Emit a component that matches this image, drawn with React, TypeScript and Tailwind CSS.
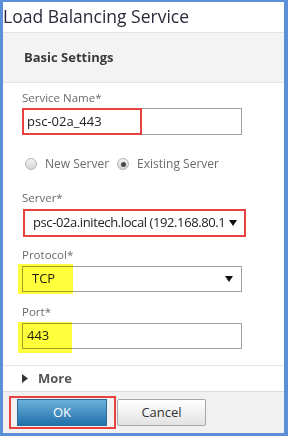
import React from "react";

const font = { fontFamily: '"Open Sans", "Noto Sans", sans-serif' };

function Arrow() {
  return (
    <svg width="8" height="8" viewBox="0 0 8 8" className="shrink-0">
      <path d="M0 1 L8 1 L4 7 Z" fill="#111" />
    </svg>
  );
}

function Radio({ checked }: { checked?: boolean }) {
  return (
    <span className="flex h-[12px] w-[12px] shrink-0 items-center justify-center rounded-full border border-[#b5b5b5] bg-gradient-to-b from-[#f4f4f4] to-[#d4d4d4]">
      {checked && <span className="h-[5px] w-[5px] rounded-full bg-[#4a4a4a]" />}
    </span>
  );
}

export default function App() {
  return (
    <div
      className="flex h-[436px] w-[288px] flex-col bg-[#5b8fd7] pb-[3px] pl-[3px] pr-[4px] pt-[2px]"
      style={font}
    >
      <div className="flex flex-1 flex-col bg-white">
        <div className="flex h-[30px] items-center text-[17.5px] leading-none text-[#2a2a3a]">
          Load Balancing Service
        </div>
        <div className="flex h-[51px] items-center border-y border-[#e3e3e3] bg-[#f3f3f3] pl-[21px] text-[13px] font-bold text-[#3a3a3a]">
          Basic Settings
        </div>
        <div className="flex flex-col px-[19px] pt-[7px]">
          <div className="h-[16px] text-[11.5px] leading-[16px] text-[#6b6b6b]">Service Name*</div>
          <div className="relative mt-[2px] flex h-[27px] w-[220px] items-center border border-[#a0a0a0] pl-[4px] text-[13px] text-[#222]">
            psc-02a_443
            <div className="absolute left-[-1px] top-[-1px] h-[27px] w-[120px] border-2 border-[#e8413f]" />
          </div>

          <div className="mt-[21px] flex h-[16px] items-center text-[12px] text-[#6b6b6b]">
            <span className="ml-[3px]"><Radio /></span>
            <span className="ml-[8px]">New Server</span>
            <span className="ml-[8px]"><Radio checked /></span>
            <span className="ml-[8px]">Existing Server</span>
          </div>

          <div className="mt-[18px] h-[16px] text-[11.5px] leading-[16px] text-[#6b6b6b]">Server*</div>
          <div className="ml-[1px] mt-[3px] flex h-[28px] w-[223px] items-center justify-between border-2 border-[#e8413f] pl-[8px] pr-[7px] text-[13px] text-[#222]">
            <span className="overflow-hidden whitespace-nowrap tracking-[-0.4px]">psc-02a.initech.local (192.168.80.1</span>
            <span className="ml-[4px]"><Arrow /></span>
          </div>

          <div className="mt-[10px] h-[16px] text-[11.5px] leading-[16px] text-[#6b6b6b]">Protocol*</div>
          <div className="relative mt-[3px] flex h-[26px] w-[220px] items-center justify-between border border-[#a0a0a0] pl-[9px] pr-[8px] text-[13px] text-[#222]">
            <span>TCP</span>
            <Arrow />
            <div className="absolute left-[-5px] top-[-3px] h-[30px] w-[55px] bg-[#ffff3c] mix-blend-multiply" />
          </div>

          <div className="mt-[12px] h-[16px] text-[11.5px] leading-[16px] text-[#6b6b6b]">Port*</div>
          <div className="relative mt-[3px] flex h-[26px] w-[220px] items-center border border-[#a0a0a0] pl-[4px] text-[13px] text-[#222]">
            443
            <div className="absolute left-[-5px] top-[-2px] h-[31px] w-[54px] bg-[#ffff3c] mix-blend-multiply" />
          </div>
        </div>
        <div className="mt-[16px] border-t border-[#e6e6e6]" />
        <div className="flex h-[25px] items-center pl-[19px] text-[13px] font-bold text-[#555]">
          <svg width="6" height="9" viewBox="0 0 6 9">
            <path d="M0 0 L6 4.5 L0 9 Z" fill="#333" />
          </svg>
          <span className="ml-[10px]">More</span>
        </div>
        <div className="relative flex flex-1 items-start gap-[10px] border-t border-[#dcdcdc] bg-[#f1f1f1] pl-[14px] pt-[7px]">
          <button className="flex h-[27px] w-[90px] items-center justify-center border border-[#2a6c9c] bg-gradient-to-b from-[#6bb0db] to-[#1f71ab] text-[13px] text-white">
            OK
          </button>
          <button className="flex h-[27px] w-[89px] items-center justify-center rounded-[2px] border border-[#a8a8a8] bg-gradient-to-b from-[#ffffff] to-[#e2e2e2] text-[13px] text-[#333]">
            Cancel
          </button>
          <div className="absolute left-[6px] top-[4px] h-[33px] w-[107px] border-2 border-[#e8413f]" />
        </div>
      </div>
    </div>
  );
}
